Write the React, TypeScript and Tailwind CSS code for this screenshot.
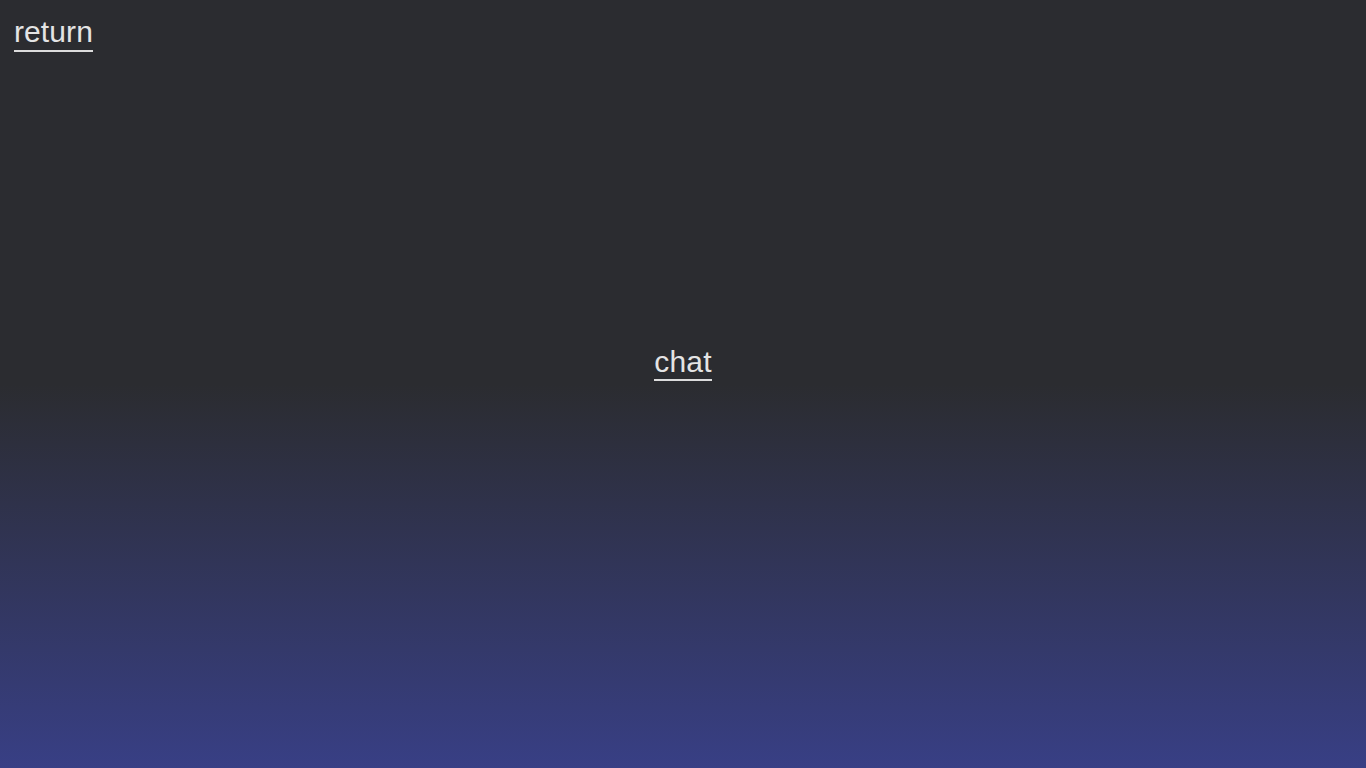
import React from 'react';

const App = () => {
  return (
    <div
      className="min-h-screen flex flex-col px-[14px] pt-[15px] pb-[14px] bg-[linear-gradient(to_bottom,#2b2c30_0%,#2b2c30_50%,#383f85_100%)] text-[#e4e4e4]"
      style={{ fontFamily: '"Liberation Sans", Arial, sans-serif' }}
    >
      <div className="flex">
        <a href="#" className="text-[30px] leading-[34.5px] tracking-[0.1px] border-b-2 border-[#dcdcdc]">
          return
        </a>
      </div>
      <main className="flex-1 flex items-center justify-center pb-[80px]">
        <a href="#" className="text-[30px] leading-[34.5px] tracking-[0.2px] border-b-2 border-[#dcdcdc]">
          chat
        </a>
      </main>
    </div>
  );
};

export default App;
